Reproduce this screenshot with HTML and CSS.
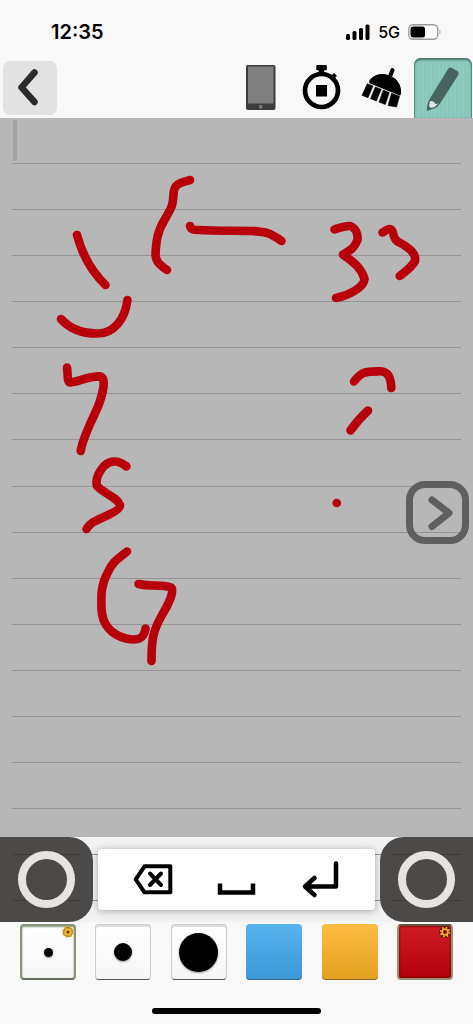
FILE: index.html
```html
<!DOCTYPE html>
<html lang="en">
<head>
<meta charset="utf-8">
<meta name="viewport" content="width=device-width, initial-scale=1">
<title>Handwriting notes</title>
<link rel="stylesheet" href="styles.css">
</head>
<body>
<div class="status">
  <time class="clock">12:35</time>
  <div class="signals">
    <svg class="bars" viewBox="0 0 24 16" aria-hidden="true"><rect x="0" y="10" width="4" height="6" rx="1.5"/><rect x="6.5" y="7" width="4" height="9" rx="1.5"/><rect x="13" y="4" width="4" height="12" rx="1.5"/><rect x="19.500" y="0.500" width="4" height="15.500" rx="1.500"/></svg>
    <span class="network">5G</span>
    <svg class="battery" viewBox="0 0 34 16" aria-hidden="true"><rect x="0.750" y="0.750" width="29" height="14.500" rx="4.500" fill="#fff" stroke="#9a9a9a" stroke-width="1.300"/><rect x="2.500" y="2.500" width="14.500" height="11" rx="2.500"/><path d="M31.500 5.500Q33.500 8 31.500 10.500Z" fill="#9a9a9a"/></svg>
  </div>
</div>
<header class="toolbar">
  <button class="back" aria-label="Back"><svg viewBox="4 61 54 54"><path d="M35.500 72.500L22.500 87.300L35.500 102" fill="none" stroke="#2b2b2b" stroke-width="6.500" stroke-linecap="round" stroke-linejoin="round"/></svg></button>
  <nav class="tools" aria-label="Tools">
    <button class="tool" aria-label="Device"><svg viewBox="231 58 58 60"><rect x="246" y="65" width="29.500" height="45" rx="2" fill="#3b3b3b"/><rect x="248" y="66.500" width="25.500" height="37" fill="#808080"/><circle cx="260.700" cy="106.700" r="2" fill="#777"/></svg></button>
    <button class="tool" aria-label="Timer"><svg viewBox="292 58 58 60"><circle cx="321.500" cy="90.500" r="16.500" fill="none" stroke="#000" stroke-width="4.700"/><rect x="316" y="85" width="11" height="11.500"/><rect x="316.300" y="65" width="10.500" height="5.300" rx="1"/><rect x="318.700" y="69" width="5.500" height="5"/><path d="M332 78L335.500 74.500" stroke="#000" stroke-width="4"/></svg></button>
    <button class="tool" aria-label="Clear page"><svg viewBox="353 58 58 60"><path d="M392.500 70L389 79" stroke="#000" stroke-width="4" stroke-linecap="round"/><path d="M369.300 82.500Q368.500 81.500 370 79.500C377 71.500 388 73 395 78.500C400 83 402 89 400.800 94.500Q400.400 96 399 95.300L370 83.500Z"/><path d="M367.300 83.700L373 86L368 97.700L362 95.300ZM375.300 87L381.300 89.300L376.300 101L370.500 98.700ZM383.300 90L389.300 92.500L385.300 104.500L379 102ZM391.500 93.300L399.500 96.300L396.500 107L388 105.500Z" stroke="#000" stroke-width="0.600" stroke-linejoin="round"/></svg></button>
    <button class="tool tool-active" aria-label="Pen" aria-pressed="true"><svg viewBox="414 58 58 60"><path d="M448.200 68.700Q449.500 66.600 452 68L457.500 71.300Q459.600 72.600 458.300 75L440 103.500Q438 107 434 108.500L427 111Q426.300 104 430.500 97.500Z" fill="#47655f"/><path d="M430 101L433.500 101.500L435.500 104L438.500 103.500L434.500 107L431 108L429 106Z" fill="#d5e8e2"/></svg></button>
  </nav>
</header>
<main class="page">
  <svg class="ink" viewBox="0 118 473 719" role="img" aria-label="Handwritten notes">
    <path class="rule" d="M12 163.500H461M12 209.500H461M12 255.500H461M12 301.500H461M12 347.500H461M12 393.500H461M12 439.500H461M12 486.500H461M12 532.500H461M12 578.500H461M12 624.500H461M12 670.500H461M12 716.500H461M12 762.500H461M12 808.500H461"/>
    <path class="caret" d="M15 120V161"/>
    <g class="stroke">
      <path d="M77 235C82 254 90 270 105.500 285"/>
      <path d="M61 319C70 329 83 333.500 97 333.500C114 334 125 319 127.500 300"/>
      <path d="M190 180C179 183 174 184 173.500 194C173 205 172 207 165 219C157 232 156 242 155.500 255C156 262 160 265 167 270"/>
      <path d="M190 226C191 230 194 230 199 230C218 231 233 230.500 253 231C265 232 269 232 281.500 241"/>
      <path d="M334.500 229.500C342 227 346 225.500 350 226C356 228 358 234 357.500 240C354 249 349 251 343 254.500C350 260 361 266 364.500 279C364 288 347 296 336 298"/>
      <path d="M382.500 232.500C386 230 391 226 393 233C395 243 399 241 406 246.500C413 251 416 255 415 261C412 267 406 271 399.700 276"/>
      <path d="M354 381.500C362 371 366 371.500 380 371.300C388 371 391 378 391.300 388"/>
      <path d="M368 410.500C361 417 357 421 350.500 430.500"/>
      <path d="M336.700 503H336.800"/>
      <path d="M67 367.500C68 374 67 382 70 382.500C78 382 90 375.500 101 376.500C106 379 103 393 99 404C94 417 83 436 80.700 451"/>
      <path d="M126.500 466.500C118 460 111 460 104 466C98 473 95 479 97 486C103 493 117 497 120 505C121 511 98 519 92 523C89 525 88 527 86.500 529"/>
      <path d="M127 551.500C115 561 112 563 108 572C101 585 101 594 101.500 609C102 624 111 635 126 638.500C138 641 144 639 145.500 628.500"/>
      <path d="M138.500 584C151 587 161 584 171 587.500C175 590 169 604 162 615C153 631 151.500 639 151.500 661"/>
    </g>
  </svg>
  <button class="next" aria-label="Next page"><svg viewBox="0 0 63 63"><path d="M26 19L43 32L26 45.500" fill="none" stroke="currentColor" stroke-width="7" stroke-linecap="round" stroke-linejoin="round"/></svg></button>
</main>
<section class="dock" aria-label="Writing keys">
  <button class="handle handle-left" aria-label="Left scroll"><span class="ring"></span></button>
  <div class="keys">
    <button class="key" aria-label="Backspace"><svg viewBox="129 856 48 48"><path d="M144.500 866.300H170.300V892.300H144.500L135.700 879.300Z" fill="none" stroke="#000" stroke-width="4" stroke-linejoin="round"/><path d="M150 873.500L161 885M161 873.500L150 885" stroke="#000" stroke-width="4" stroke-linecap="round"/></svg></button>
    <button class="key" aria-label="Space"><svg viewBox="213 856 48 48"><path d="M220 883.500V892.500H253V883.500" fill="none" stroke="#000" stroke-width="4.500"/></svg></button>
    <button class="key" aria-label="Return"><svg viewBox="297 856 48 48"><path d="M336 863.500V886.500H305M314.500 878L305 886.500L314.500 895" fill="none" stroke="#000" stroke-width="4.500" stroke-linecap="round" stroke-linejoin="round"/></svg></button>
  </div>
  <button class="handle handle-right" aria-label="Right scroll"><span class="ring"></span></button>
</section>
<footer class="palette">
  <div class="swatches">
    <button class="swatch paper selected" aria-label="Thin pen" aria-pressed="true"><span class="dot small"></span><svg class="gear" viewBox="0 0 14 14"><circle cx="7" cy="7" r="5" fill="#8a6a1c"/><circle cx="7" cy="7" r="4.800" fill="none" stroke="#d99b1c" stroke-width="2" stroke-dasharray="2.200 1.570"/><circle cx="7" cy="7" r="2.700" fill="#5a430c" stroke="#f5b52b" stroke-width="2.300"/></svg></button>
    <button class="swatch paper" aria-label="Medium pen"><span class="dot medium"></span></button>
    <button class="swatch paper" aria-label="Thick pen"><span class="dot large"></span></button>
    <button class="swatch blue" aria-label="Blue"></button>
    <button class="swatch amber" aria-label="Amber"></button>
    <button class="swatch red selected" aria-label="Red" aria-pressed="true"><svg class="gear" viewBox="0 0 14 14"><circle cx="7" cy="7" r="6" fill="#5a1206"/><circle cx="7" cy="7" r="4.500" fill="none" stroke="#f2b01c" stroke-width="1.800" stroke-dasharray="1.700 1.830"/><circle cx="7" cy="7" r="2.900" fill="#7a0308" stroke="#f5b52b" stroke-width="1.800"/></svg></button>
  </div>
  <div class="home"></div>
</footer>
</body>
</html>
```
FILE: styles.css
```css
* {
  box-sizing: border-box;
}

body {
  margin: 0;
  min-height: 100vh;
  display: flex;
  flex-direction: column;
  background: #f8f8f8;
  color: #000;
  font-family: Inter, "Liberation Sans", sans-serif;
}

button {
  display: block;
  padding: 0;
  border: 0;
  background: none;
  color: inherit;
  font: inherit;
}

svg {
  display: block;
}

.status {
  display: flex;
  justify-content: space-between;
  align-items: center;
  height: 58px;
  padding: 5px 31px 0 51px;
}

.clock {
  font-size: 20px;
  line-height: 24px;
  font-weight: 600;
}

.signals {
  display: flex;
  align-items: center;
  gap: 8px;
}

.bars {
  width: 24px;
  height: 16px;
}

.network {
  font-size: 16px;
  line-height: 24px;
  font-weight: 500;
}

.battery {
  width: 34px;
  height: 16px;
}

.toolbar {
  display: flex;
  justify-content: space-between;
  align-items: center;
  height: 60px;
  padding: 0 1px 0 3px;
}

.back {
  width: 54px;
  height: 54px;
  border-radius: 7px;
  background: #e2e2e2;
}

.tools {
  display: flex;
  gap: 3px;
}

.tool {
  width: 58px;
  height: 60px;
}

.tool-active {
  border-radius: 7px 7px 0 0;
  background: repeating-linear-gradient(90deg, #8ccbbe 0 2px, #88c7ba 2px 4px);
  box-shadow: inset 0 2px 2px #49756c, inset 1px 0 1px #5e8e84, inset -1px 0 1px #5e8e84;
}

.page {
  position: relative;
  flex: 1;
  background: #b7b7b7;
}

.ink {
  width: 100%;
}

.rule {
  stroke: #949494;
  stroke-width: 1;
}

.caret {
  stroke: #a2a4a4;
  stroke-width: 4;
}

.stroke {
  fill: none;
  stroke: #b7000b;
  stroke-width: 8.6;
  stroke-linecap: round;
  stroke-linejoin: round;
}

.next {
  position: absolute;
  right: 4px;
  top: 363px;
  width: 63px;
  height: 63px;
  border: 7px solid #605e5f;
  border-radius: 19px;
  color: #605e5f;
}

.next svg {
  width: 63px;
  height: 63px;
  margin: -7px;
}

.dock {
  display: flex;
  align-items: center;
  gap: 5px;
  height: 85px;
  background:
    linear-gradient(#949494, #949494) 12px 17px / calc(100% - 24px) 1px no-repeat,
    linear-gradient(#949494, #949494) 12px 63px / calc(100% - 24px) 1px no-repeat,
    #f1f1f1;
}

.handle {
  display: grid;
  align-items: center;
  width: 93px;
  height: 85px;
  padding: 0 18px;
  background:
    linear-gradient(#3c3b39, #3c3b39) 12px 17px / 69px 1px no-repeat,
    linear-gradient(#3c3b39, #3c3b39) 12px 63px / 69px 1px no-repeat,
    #4b4a48;
}

.handle-left {
  border-radius: 0 24px 24px 0;
}

.handle-right {
  border-radius: 24px 0 0 24px;
}

.ring {
  width: 57px;
  height: 57px;
  border: 8px solid #e5e4e2;
  border-radius: 50%;
}

.keys {
  display: flex;
  flex: 1;
  justify-content: center;
  align-items: center;
  gap: 36px;
  height: 61px;
  border-radius: 4px;
  background: #fff;
  box-shadow: 0 1px 7px #0005;
}

.key {
  width: 48px;
  height: 48px;
}

.palette {
  display: flex;
  flex-direction: column;
  justify-content: space-between;
  align-items: center;
  height: 102px;
  padding-bottom: 10px;
}

.swatches {
  display: flex;
  justify-content: space-between;
  align-self: stretch;
  padding: 2px 20px 0;
}

.swatch {
  position: relative;
  display: grid;
  place-items: center;
  width: 56px;
  height: 56px;
  border-radius: 4px;
}

.paper {
  border: 1px solid #ccc;
  border-bottom-color: #555;
  background: linear-gradient(#fff, #f6f6f6);
  box-shadow: inset 0 2px 1px #ddd;
}

.paper.selected {
  border: 2px solid #84957a;
  border-bottom-color: #65715d;
  box-shadow: inset 0 1px 2px #84957a;
}

.blue {
  background: linear-gradient(#57b4ef, #3998d5);
  box-shadow: inset 0 -1px 0 #34698c;
}

.amber {
  background: linear-gradient(#fcbc42, #e4a020);
  box-shadow: inset 0 -1px 0 #8b672a;
}

.red.selected {
  border: 2px solid #9b9276;
  border-top-color: #64533e;
  background: linear-gradient(#d01d25, #b3000b);
  box-shadow: inset 0 0 3px #500;
}

.dot {
  border-radius: 50%;
  background: #000;
  box-shadow: 0 1px 2px #0006;
}

.small {
  width: 9px;
  height: 9px;
}

.medium {
  width: 18px;
  height: 18px;
}

.large {
  width: 39px;
  height: 39px;
}

.gear {
  position: absolute;
  top: -1px;
  right: -1px;
  width: 14px;
  height: 14px;
}

.home {
  width: 169px;
  height: 6px;
  border-radius: 3px;
  background: #000;
}
```
